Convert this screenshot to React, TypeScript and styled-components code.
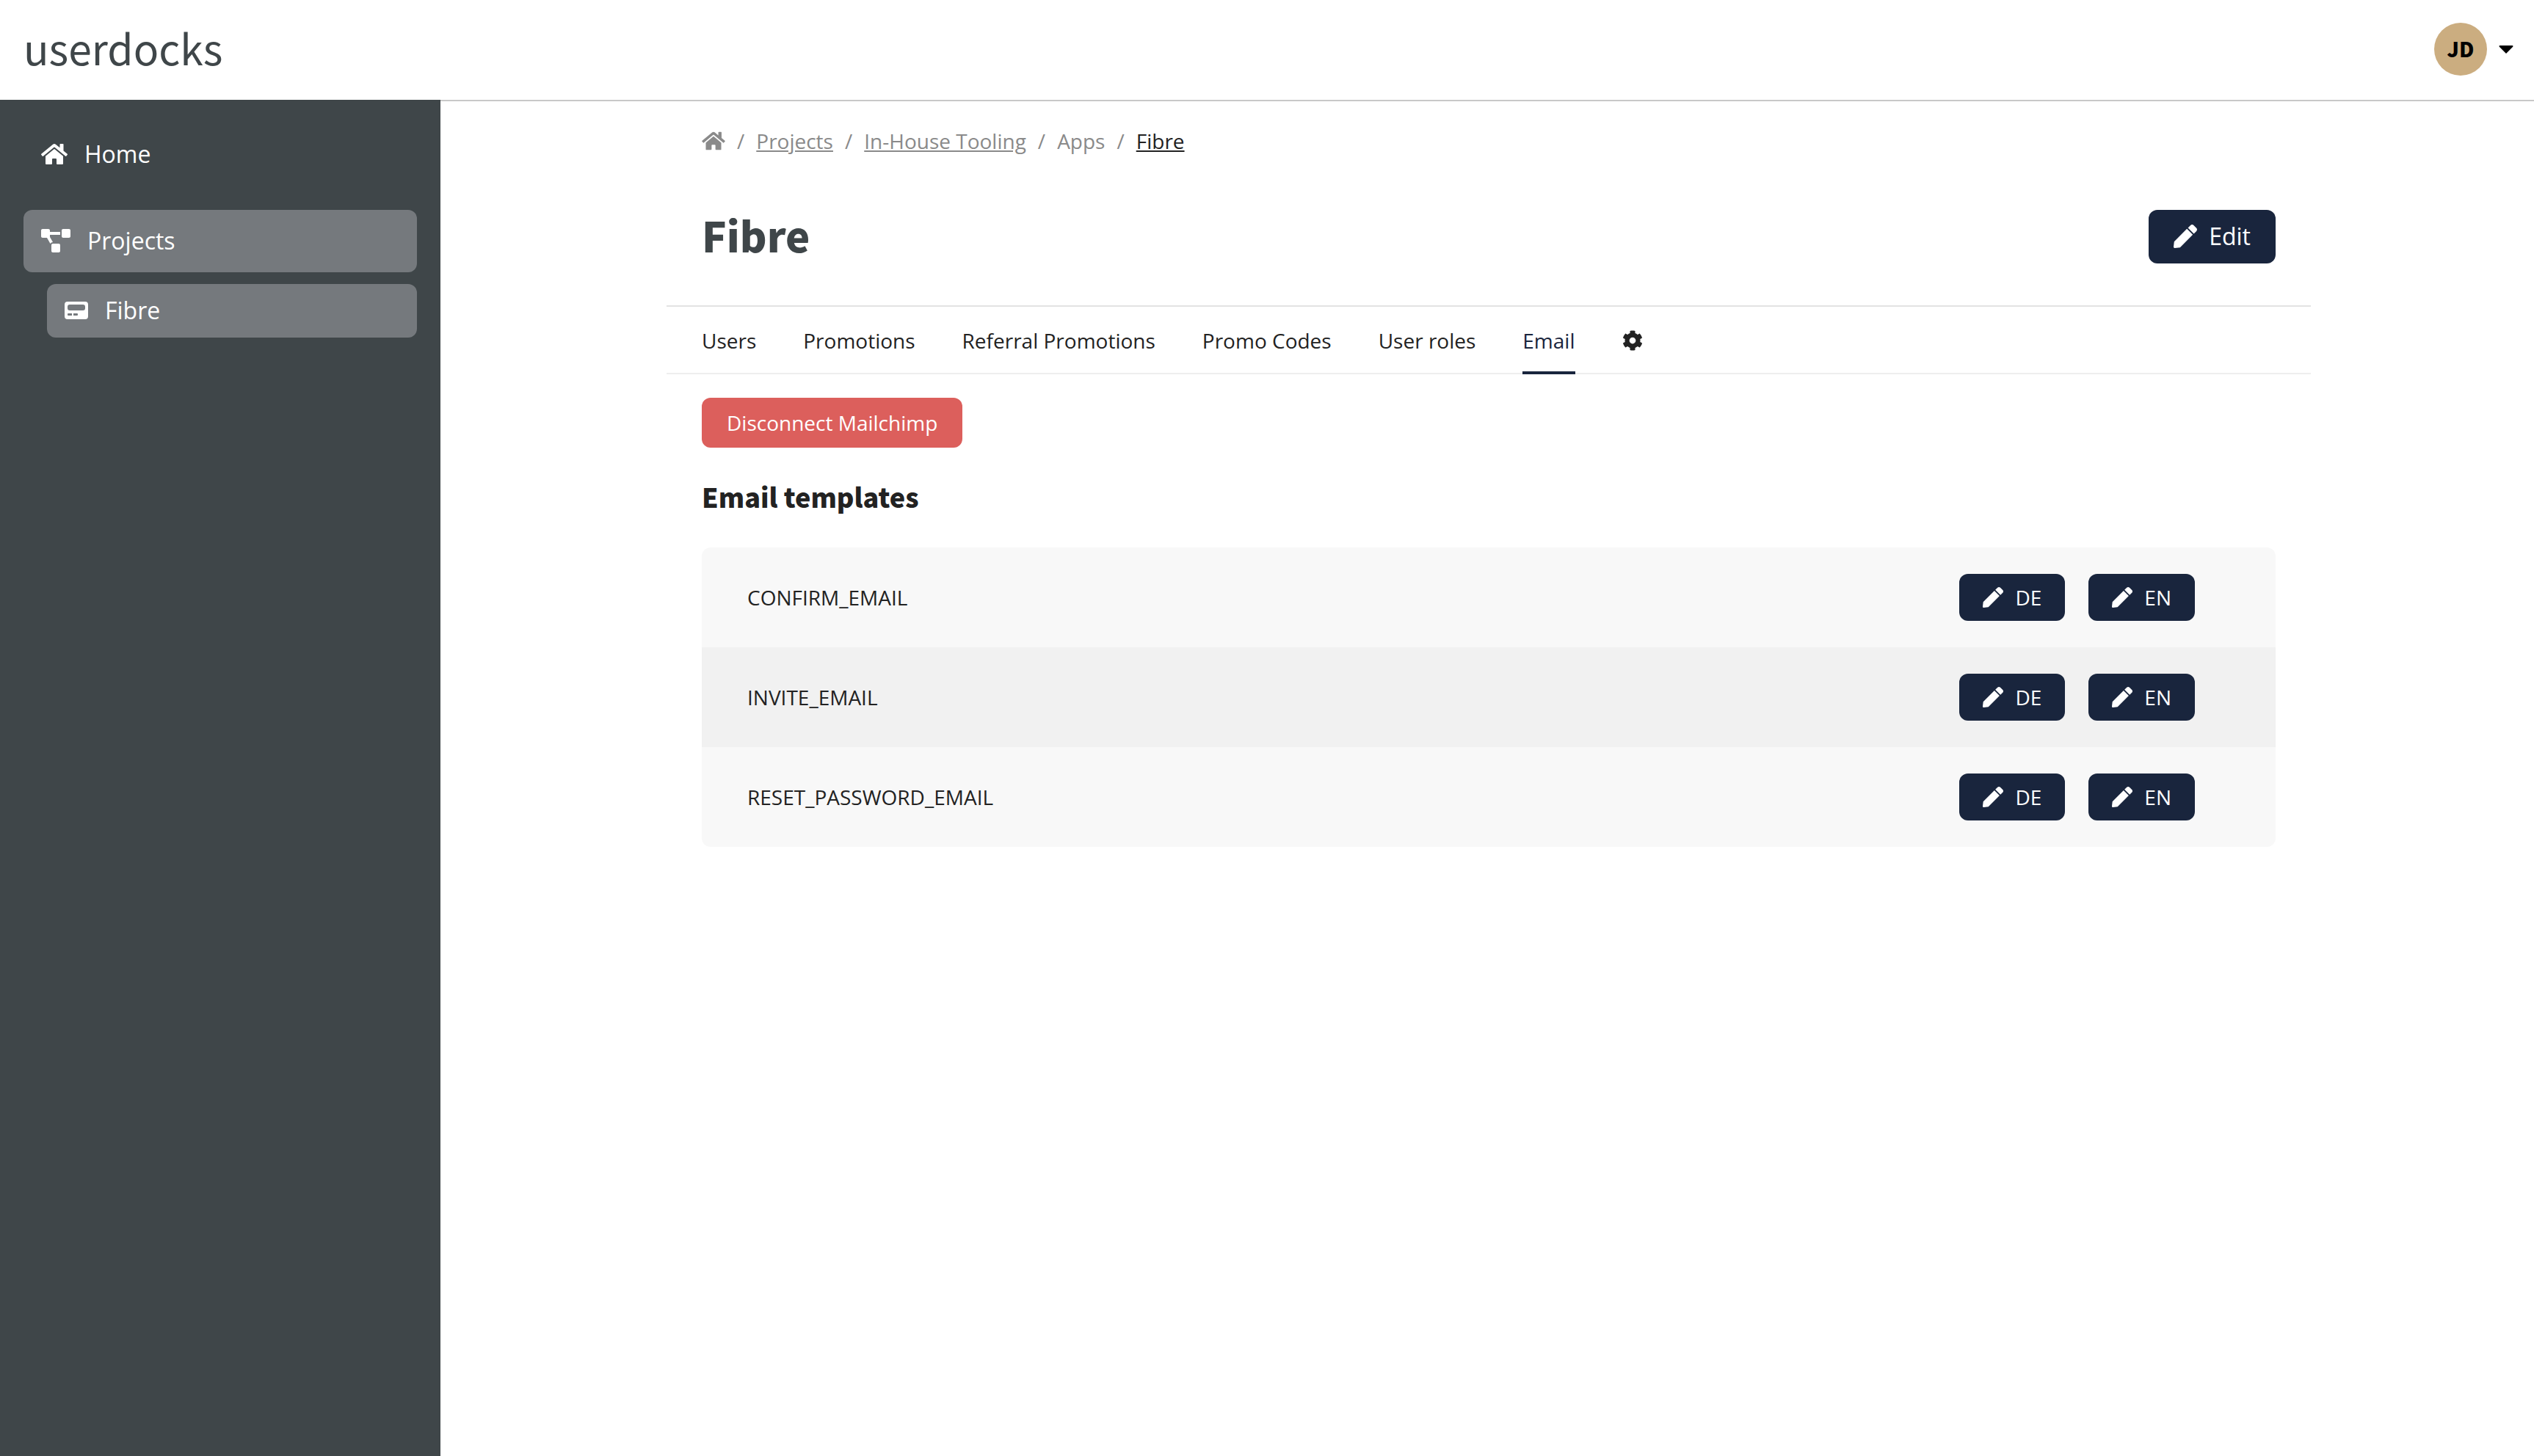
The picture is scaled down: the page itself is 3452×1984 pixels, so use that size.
import React from "react";
import styled, { createGlobalStyle } from "styled-components";
import { FaCog, FaHome, FaPen, FaProjectDiagram } from "react-icons/fa";

const body = `"Open Sans", "Noto Sans", sans-serif`;
const display = `"Noto Sans CJK SC", "Open Sans", sans-serif`;
const navy = "#19253d";

const Global = createGlobalStyle`
  *, *::before, *::after { box-sizing: border-box; }
  body { margin: 0; background: #fff; color: #222; font-family: ${body}; font-size: 28px; line-height: 44px; }
  a { color: inherit; }
  ul, ol { list-style: none; margin: 0; padding: 0; }
  h1, h2, p { margin: 0; }
  button { font: inherit; border: 0; cursor: pointer; }
  svg { display: block; flex: none; }
`;

const Page = styled.div`
  display: flex;
  flex-direction: column;
  min-height: 100vh;
`;

const Header = styled.header`
  display: flex;
  align-items: center;
  justify-content: space-between;
  height: 136px;
  padding: 0 28px 2px 32px;
`;

const Brand = styled.a`
  padding-bottom: 6px;
  font-family: ${display};
  font-size: 57px;
  line-height: 72px;
  color: #3f4649;
  text-decoration: none;
`;

const Account = styled.button`
  display: flex;
  align-items: center;
  gap: 16px;
  padding: 0;
  background: none;
  color: #000;
`;

const Avatar = styled.span`
  display: grid;
  place-items: center;
  width: 72px;
  height: 72px;
  padding-bottom: 2px;
  border-radius: 50%;
  background: #cbad80;
  font-family: ${display};
  font-weight: 900;
  font-size: 28px;
`;

const Body = styled.div`
  display: flex;
  flex: 1;
`;

const Sidebar = styled.nav`
  flex: none;
  width: 600px;
  padding: 32px;
  background: #3f4649;
  color: #fff;
  font-size: 32px;
`;

const NavItem = styled.a<{ $active?: boolean; $nested?: boolean }>`
  display: flex;
  align-items: center;
  gap: 23px;
  height: ${(p) => (p.$nested ? 73 : 85)}px;
  margin: ${(p) => (p.$nested ? "16px 0 0 32px" : "0")};
  padding: 0 24px 1px;
  border-radius: 12px;
  background: ${(p) => (p.$active ? "#75797d" : "transparent")};
  text-decoration: none;
`;

const NavGroup = styled.li`
  & + & { margin-top: 33px; }
`;

const Main = styled.main`
  flex: 1;
  padding: 0 304px 0 308px;
  border-top: 2px solid #c8c8c8;
`;

const Column = styled.div`
  max-width: 2240px;
  margin: 0 auto;
`;

const Inset = styled.div`
  padding: 0 48px;
`;

const Crumbs = styled.ol`
  display: flex;
  align-items: center;
  padding-top: 32px;
  color: #8a8a8a;
`;

const Crumb = styled.li`
  display: flex;
  align-items: center;
  & + &::before {
    content: "/";
    margin: 0 16px;
  }
  [aria-current] { color: #222; }
`;

const TitleRow = styled.div`
  display: flex;
  align-items: center;
  justify-content: space-between;
  padding: 72px 0 57px;
`;

const Title = styled.h1`
  padding-bottom: 6px;
  font-family: ${display};
  font-weight: 900;
  font-size: 56px;
  line-height: 64px;
  color: #3f4649;
`;

const sizes = {
  small: { height: 64, padding: 32, font: 28 },
  medium: { height: 68, padding: 34, font: 28 },
  large: { height: 73, padding: 34, font: 32 },
};

const Button = styled.button<{ $size?: keyof typeof sizes; $tone?: "danger" }>`
  display: inline-flex;
  align-items: center;
  gap: 16px;
  height: ${(p) => sizes[p.$size ?? "medium"].height}px;
  padding: 0 ${(p) => sizes[p.$size ?? "medium"].padding}px 1px;
  border-radius: 12px;
  background: ${(p) => (p.$tone === "danger" ? "#dc5f5c" : navy)};
  color: #fff;
  font-size: ${(p) => sizes[p.$size ?? "medium"].font}px;
`;

const Tabs = styled.ul`
  display: flex;
  gap: 64px;
  height: 94px;
  padding: 0 48px;
  border-top: 2px solid #e3e3e3;
  border-bottom: 2px solid #eee;
`;

const Tab = styled.a<{ $active?: boolean }>`
  display: flex;
  align-items: center;
  height: 92px;
  padding-top: 4px;
  border-bottom: 4px solid ${(p) => (p.$active ? navy : "transparent")};
  color: ${(p) => (p.$active ? navy : "#222")};
  text-decoration: none;
`;

const SectionTitle = styled.h2`
  margin: 42px 0 46px;
  font-family: ${display};
  font-weight: 900;
  font-size: 36px;
  line-height: 48px;
`;

const Section = styled.section`
  padding: 32px 48px;
`;

const Templates = styled.ul`
  overflow: hidden;
  border-radius: 12px;
`;

const Template = styled.li`
  display: flex;
  align-items: center;
  gap: 32px;
  height: 136px;
  padding: 0 110px 0 62px;
  background: #f8f8f8;
  &:nth-child(even) { background: #f1f1f1; }
`;

const TemplateName = styled.span`
  flex: 1;
`;

const HomeGlyph = styled(FaHome)<{ $small?: boolean }>`
  width: ${(p) => (p.$small ? 32 : 36)}px;
  height: ${(p) => (p.$small ? 28 : 32)}px;
`;

const ProjectsGlyph = styled(FaProjectDiagram)`
  width: 40px;
  height: 32px;
`;

const AppIcon = () => (
  <svg width="32" height="24" viewBox="0 0 32 24" fill="currentColor" fillRule="evenodd" aria-hidden="true">
    <path d="M4 0h24a4 4 0 0 1 4 4v16a4 4 0 0 1-4 4H4a4 4 0 0 1-4-4V4a4 4 0 0 1 4-4zM7 4a3 3 0 0 0-3 3v2a3 3 0 0 0 3 3h18a3 3 0 0 0 3-3V7a3 3 0 0 0-3-3zM5 16a1 1 0 0 0-1 1v1a1 1 0 0 0 1 1h5v-3zm7 0v3h5a1 1 0 0 0 1-1v-1a1 1 0 0 0-1-1z" />
  </svg>
);

const Caret = () => (
  <svg width="20" height="12" viewBox="0 0 20 12" fill="currentColor" aria-hidden="true">
    <path d="M1.500 1h17a1 1 0 0 1 .7 1.700L10 12 .8 2.700A1 1 0 0 1 1.500 1z" />
  </svg>
);

const tabs = ["Users", "Promotions", "Referral Promotions", "Promo Codes", "User roles", "Email"];
const templates = ["CONFIRM_EMAIL", "INVITE_EMAIL", "RESET_PASSWORD_EMAIL"];
const languages = ["DE", "EN"];

export default function App() {
  return (
    <Page>
      <Global />
      <Header>
        <Brand href="#">userdocks</Brand>
        <Account aria-label="Account menu">
          <Avatar>JD</Avatar>
          <Caret />
        </Account>
      </Header>
      <Body>
        <Sidebar>
          <ul>
            <NavGroup>
              <NavItem href="#"><HomeGlyph />Home</NavItem>
            </NavGroup>
            <NavGroup>
              <NavItem href="#" $active><ProjectsGlyph />Projects</NavItem>
              <NavItem href="#" $active $nested><AppIcon />Fibre</NavItem>
            </NavGroup>
          </ul>
        </Sidebar>
        <Main>
          <Column>
            <Inset>
              <Crumbs>
                <Crumb><a href="#" aria-label="Home"><HomeGlyph $small /></a></Crumb>
                <Crumb><a href="#">Projects</a></Crumb>
                <Crumb><a href="#">In-House Tooling</a></Crumb>
                <Crumb>Apps</Crumb>
                <Crumb><a href="#" aria-current="page">Fibre</a></Crumb>
              </Crumbs>
              <TitleRow>
                <Title>Fibre</Title>
                <Button $size="large"><FaPen size={32} />Edit</Button>
              </TitleRow>
            </Inset>
            <Tabs>
              {tabs.map((name) => (
                <li key={name}><Tab href="#" $active={name === "Email"}>{name}</Tab></li>
              ))}
              <li><Tab href="#" aria-label="Settings"><FaCog size={28} /></Tab></li>
            </Tabs>
            <Section>
              <Button $tone="danger">Disconnect Mailchimp</Button>
              <SectionTitle>Email templates</SectionTitle>
              <Templates>
                {templates.map((name) => (
                  <Template key={name}>
                    <TemplateName>{name}</TemplateName>
                    {languages.map((language) => (
                      <Button key={language} $size="small"><FaPen size={28} />{language}</Button>
                    ))}
                  </Template>
                ))}
              </Templates>
            </Section>
          </Column>
        </Main>
      </Body>
    </Page>
  );
}
